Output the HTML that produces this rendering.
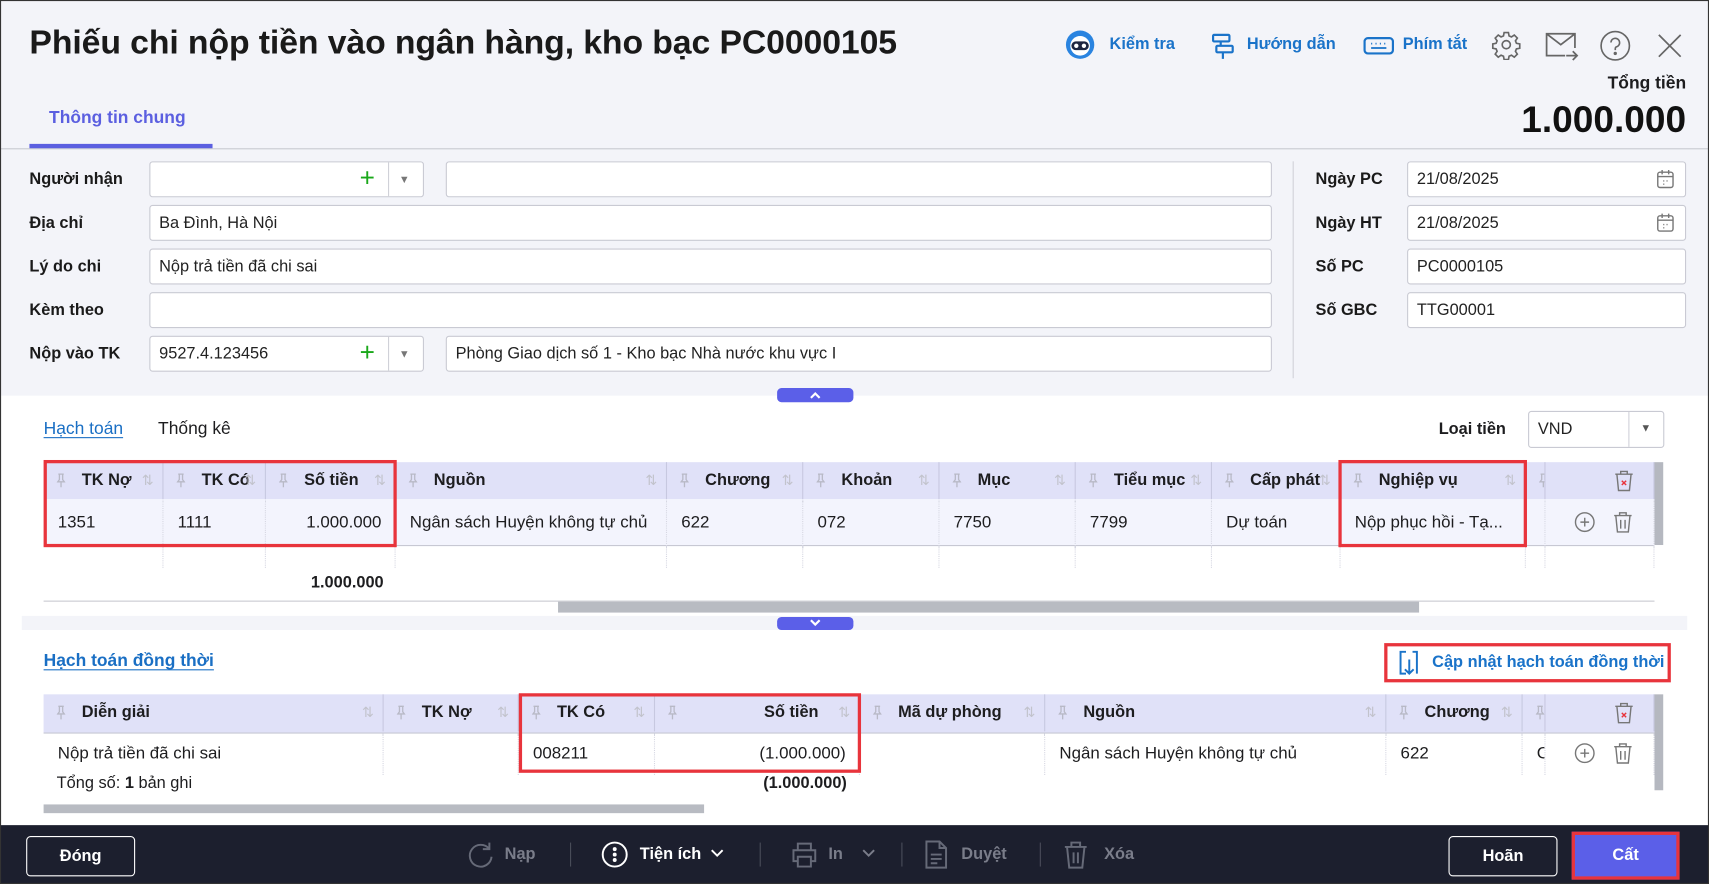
<!DOCTYPE html>
<html><head><meta charset="utf-8">
<style>
html,body{margin:0;padding:0;width:1709px;height:884px;overflow:hidden;background:#fff}
#w{position:absolute;left:0;top:0;width:1568px;height:811px;transform:scale(1.08992,1.09001);transform-origin:0 0;font-family:"Liberation Sans","DejaVu Sans",sans-serif;color:#1d1d1f;font-size:15px;background:#fff;overflow:hidden}
.a{position:absolute}
.b{font-weight:bold}
.lbl{position:absolute;font-weight:bold;font-size:15px;color:#1a1a1a}
.inp{position:absolute;background:#fff;border:1px solid #c9cad3;border-radius:3px;height:33px;box-sizing:border-box;font-size:15px;line-height:31px;padding-left:8px;color:#222}
.th{position:absolute;height:34px;line-height:34px;font-weight:bold;font-size:15px;border-right:1px solid #c7c8e0;box-sizing:border-box;white-space:nowrap;overflow:hidden}
.td{position:absolute;height:42px;line-height:42px;font-size:15.5px;border-right:1px dotted #d6d7e2;box-sizing:border-box;white-space:nowrap;overflow:hidden}
.pin{position:absolute;left:12px;top:10px;width:8px;height:14px}
.srt{position:absolute;right:8px;top:0;color:#c2c3cc;font-weight:normal;font-size:13px}
.red{position:absolute;border:3px solid #e8343c;box-sizing:border-box}
.blue{color:#1a73c9}
</style></head><body>
<div id="w">
<div class="a" style="left:0;top:0;width:1568px;height:363px;background:#f3f4f9"></div>
<div class="a" style="left:0;top:136px;width:1568px;height:1px;background:#c8c9d0"></div>
<div class="a b" style="left:27px;top:21px;font-size:31px;color:#1a1a1a;letter-spacing:-0.1px">Phiếu chi nộp tiền vào ngân hàng, kho bạc PC0000105</div>

<svg class="a" style="left:977px;top:27px" width="28" height="28" viewBox="0 0 28 28"><circle cx="14" cy="14" r="13" fill="#2a84e0"/><circle cx="14" cy="15" r="9" fill="#fff"/><rect x="6" y="11" width="16" height="8" rx="4" fill="#1c2540"/><circle cx="10.5" cy="15" r="2" fill="#fff"/><circle cx="17.5" cy="15" r="2" fill="#fff"/></svg>
<div class="a blue" style="left:1018px;top:32px;font-size:15px;font-weight:bold;color:#1a73c9">Kiểm tra</div>
<svg class="a" style="left:1110px;top:29px" width="24" height="26" viewBox="0 0 24 26" fill="none" stroke="#1a73c9" stroke-width="2"><rect x="3" y="3" width="15" height="6" rx="1"/><rect x="6" y="13" width="15" height="6" rx="1"/><path d="M10 9v4M12 19v6"/></svg>
<div class="a" style="left:1144px;top:32px;font-size:15px;font-weight:bold;color:#1a73c9">Hướng dẫn</div>
<svg class="a" style="left:1250px;top:32px" width="30" height="20" viewBox="0 0 30 20" fill="none" stroke="#1a73c9" stroke-width="2"><rect x="2" y="3" width="26" height="14" rx="3"/><path d="M8 8h1M12 8h1M16 8h1M20 8h1M8 12h14" stroke-width="1.6"/></svg>
<div class="a" style="left:1287px;top:32px;font-size:15px;font-weight:bold;color:#1a73c9">Phím tắt</div>
<svg class="a" style="left:1368px;top:27px" width="28" height="28" viewBox="0 0 24 24" fill="none" stroke="#666" stroke-width="1.3"><circle cx="12" cy="12" r="3.2"/><path d="M10.3 2.5h3.4l.5 2.6 1.9.8 2.2-1.5 2.4 2.4-1.5 2.2.8 1.9 2.6.5v3.4l-2.6.5-.8 1.9 1.5 2.2-2.4 2.4-2.2-1.5-1.9.8-.5 2.6h-3.4l-.5-2.6-1.9-.8-2.2 1.5-2.4-2.4 1.5-2.2-.8-1.9-2.6-.5v-3.4l2.6-.5.8-1.9-1.5-2.2 2.4-2.4 2.2 1.5 1.9-.8z"/></svg>
<svg class="a" style="left:1417px;top:27px" width="32" height="32" viewBox="0 0 32 32" fill="none" stroke="#666" stroke-width="1.6"><path d="M2 19V4h26v13M2 4l13 10 13-10M2 19v5h17"/><path d="M20 24h10M26 20l4 4-4 4"/></svg>
<svg class="a" style="left:1467px;top:27px" width="30" height="30" viewBox="0 0 30 30" fill="none" stroke="#666" stroke-width="1.5"><circle cx="15" cy="15" r="13"/><path d="M11 12a4 4 0 1 1 5 4c-1 .5-1 1-1 3"/><circle cx="15" cy="22" r=".8" fill="#666"/></svg>
<svg class="a" style="left:1520px;top:30px" width="24" height="24" viewBox="0 0 24 24" stroke="#666" stroke-width="1.6"><path d="M2 2l20 20M22 2L2 22"/></svg>
<div class="a b" style="right:21px;top:68px;font-size:16px">Tổng tiền</div>
<div class="a b" style="right:21px;top:91px;font-size:34px;color:#111">1.000.000</div>

<div class="a" style="left:45px;top:100px;font-size:16px;font-weight:bold;color:#5b5fe0">Thông tin chung</div>
<div class="a" style="left:27px;top:132px;width:168px;height:4px;background:#5b5fe0"></div>

<div class="lbl" style="left:27px;top:156px">Người nhận</div>
<div class="lbl" style="left:27px;top:196px">Địa chỉ</div>
<div class="lbl" style="left:27px;top:236px">Lý do chi</div>
<div class="lbl" style="left:27px;top:276px">Kèm theo</div>
<div class="lbl" style="left:27px;top:316px">Nộp vào TK</div>

<div class="inp" style="left:137px;top:148px;width:252px"></div>
<div class="a" style="left:330px;top:151px;color:#1aa81a;font-size:24px;line-height:26px">+</div>
<div class="a" style="left:356px;top:149px;width:1px;height:31px;background:#d0d1d8"></div>
<div class="a" style="left:366px;top:160px;color:#777;font-size:10px">▼</div>
<div class="inp" style="left:409px;top:148px;width:758px"></div>

<div class="inp" style="left:137px;top:188px;width:1030px">Ba Đình, Hà Nội</div>
<div class="inp" style="left:137px;top:228px;width:1030px">Nộp trả tiền đã chi sai</div>
<div class="inp" style="left:137px;top:268px;width:1030px"></div>
<div class="inp" style="left:137px;top:308px;width:252px">9527.4.123456</div>
<div class="a" style="left:330px;top:311px;color:#1aa81a;font-size:24px;line-height:26px">+</div>
<div class="a" style="left:356px;top:309px;width:1px;height:31px;background:#d0d1d8"></div>
<div class="a" style="left:366px;top:320px;color:#777;font-size:10px">▼</div>
<div class="inp" style="left:409px;top:308px;width:758px">Phòng Giao dịch số 1 - Kho bạc Nhà nước khu vực I</div>

<div class="a" style="left:1186px;top:148px;width:1px;height:199px;background:#d0d1d8"></div>
<div class="lbl" style="left:1207px;top:156px">Ngày PC</div>
<div class="lbl" style="left:1207px;top:196px">Ngày HT</div>
<div class="lbl" style="left:1207px;top:236px">Số PC</div>
<div class="lbl" style="left:1207px;top:276px">Số GBC</div>
<div class="inp" style="left:1291px;top:148px;width:256px">21/08/2025</div>
<div class="inp" style="left:1291px;top:188px;width:256px">21/08/2025</div>
<svg class="a" style="left:1519px;top:155px" width="18" height="19" viewBox="0 0 18 19" fill="none" stroke="#777" stroke-width="1.3"><rect x="2" y="3" width="14" height="14" rx="2"/><path d="M2 7h14M6 1v4M12 1v4"/><path d="M7 11h1M10 11h1M7 14h1" stroke-width="1.2"/></svg>
<svg class="a" style="left:1519px;top:195px" width="18" height="19" viewBox="0 0 18 19" fill="none" stroke="#777" stroke-width="1.3"><rect x="2" y="3" width="14" height="14" rx="2"/><path d="M2 7h14M6 1v4M12 1v4"/><path d="M7 11h1M10 11h1M7 14h1" stroke-width="1.2"/></svg>
<div class="inp" style="left:1291px;top:228px;width:256px">PC0000105</div>
<div class="inp" style="left:1291px;top:268px;width:256px">TTG00001</div>

<div class="a" style="left:713px;top:356px;width:70px;height:13px;border-radius:4px;background:#5b5fe8"></div>
<svg class="a" style="left:742px;top:358px" width="12" height="9" viewBox="0 0 12 9" fill="none" stroke="#fff" stroke-width="2"><path d="M2 7l4-4 4 4"/></svg>

<div class="a" style="left:40px;top:385px;font-size:16px;color:#1a6fc4;text-decoration:underline;text-underline-offset:3px">Hạch toán</div>
<div class="a" style="left:145px;top:385px;font-size:16px">Thống kê</div>
<div class="a b" style="left:1320px;top:385px;font-size:15px">Loại tiền</div>
<div class="inp" style="left:1402px;top:377px;width:125px;height:34px;line-height:32px">VND</div>
<div class="a" style="left:1494px;top:378px;width:1px;height:32px;background:#d0d1d8"></div>
<div class="a" style="left:1505px;top:388px;color:#555;font-size:10px">▼</div>

<div class="a" style="left:40px;top:424px;width:1478px;height:34px;background:#e0e1f8"></div>
<div class="a" style="left:40px;top:458px;width:1478px;height:42px;background:#f3f4fd;border-bottom:1px solid #c7c8d3"></div>
<div class="a" style="left:1518px;top:424px;width:8px;height:76px;background:#b5b8c0"></div>
<div id="t1"></div>
<div class="a b" style="left:40px;top:526px;width:312px;text-align:right">1.000.000</div>
<div class="a" style="left:40px;top:551px;width:1478px;height:1px;background:#c8c9d0"></div>
<div class="a" style="left:512px;top:552px;width:790px;height:10px;background:#b8bbc2"></div>
<div class="red" style="left:40px;top:422px;width:324px;height:80px"></div>
<div class="red" style="left:1228px;top:422px;width:173px;height:80px"></div>

<div class="a" style="left:20px;top:565px;width:1528px;height:13px;background:#f3f4f9"></div>
<div class="a" style="left:713px;top:566px;width:70px;height:12px;border-radius:4px;background:#5b5fe8"></div>
<svg class="a" style="left:742px;top:567px" width="12" height="9" viewBox="0 0 12 9" fill="none" stroke="#fff" stroke-width="2"><path d="M2 2l4 4 4-4"/></svg>

<div class="a" style="left:40px;top:598px;font-size:16px;color:#1a6fc4;text-decoration:underline;text-underline-offset:3px;font-weight:bold">Hạch toán đồng thời</div>
<div class="red" style="left:1270px;top:590px;width:263px;height:36px"></div>
<svg class="a" style="left:1282px;top:596px" width="22" height="25" viewBox="0 0 22 25" fill="none" stroke="#1a73c9" stroke-width="1.8"><path d="M8 2H3v20h5M14 2h4v20"/><path d="M11 9v13M7 18l4 4 4-4"/></svg>
<div class="a" style="left:1314px;top:599px;font-size:15px;font-weight:bold;color:#1a73c9">Cập nhật hạch toán đồng thời</div>

<div class="a" style="left:40px;top:637px;width:1478px;height:35px;background:#e0e1f8;border-bottom:1px solid #c7c8d3"></div>
<div class="a" style="left:1518px;top:637px;width:8px;height:88px;background:#b5b8c0"></div>
<div id="t2"></div>
<div class="a" style="left:52px;top:710px;font-size:15px">Tổng số: <b>1</b> bản ghi</div>
<div class="a b" style="left:601px;top:710px;width:176px;text-align:right">(1.000.000)</div>
<div class="red" style="left:476px;top:636px;width:314px;height:73px"></div>
<div class="a" style="left:40px;top:738px;width:606px;height:8px;background:#b8bbc2"></div>

<div class="a" style="left:0;top:757px;width:1568px;height:54px;background:#1c1f2e"></div>
<div class="a" style="left:24px;top:767px;width:98px;height:35px;border:1.5px solid #fff;border-radius:4px;color:#fff;text-align:center;line-height:35px;font-weight:bold;font-size:15px">Đóng</div>
<svg class="a" style="left:428px;top:771px" width="26" height="26" viewBox="0 0 26 26" fill="none" stroke="#666a78" stroke-width="1.8"><path d="M21 8A10 10 0 1 0 23 15M21 2v6h-6"/></svg>
<div class="a b" style="left:463px;top:775px;color:#7a7d8a;font-size:15px">Nạp</div>
<div class="a" style="left:523px;top:773px;width:1px;height:22px;background:#4a4d5a"></div>
<svg class="a" style="left:551px;top:771px" width="26" height="26" viewBox="0 0 26 26" fill="none" stroke="#fff" stroke-width="1.8"><circle cx="13" cy="13" r="11"/><circle cx="13" cy="8" r=".9" fill="#fff"/><circle cx="13" cy="13" r=".9" fill="#fff"/><circle cx="13" cy="18" r=".9" fill="#fff"/></svg>
<div class="a b" style="left:587px;top:775px;color:#fff;font-size:15px">Tiện ích</div>
<svg class="a" style="left:652px;top:779px" width="12" height="8" viewBox="0 0 12 8" fill="none" stroke="#fff" stroke-width="1.8"><path d="M1 1l5 5 5-5"/></svg>
<div class="a" style="left:697px;top:773px;width:1px;height:22px;background:#4a4d5a"></div>
<svg class="a" style="left:725px;top:771px" width="26" height="26" viewBox="0 0 26 26" fill="none" stroke="#666a78" stroke-width="1.8"><path d="M7 9V3h12v6M7 19H3V9h20v10h-4M7 15h12v9H7z"/></svg>
<div class="a b" style="left:760px;top:775px;color:#7a7d8a;font-size:15px">In</div>
<svg class="a" style="left:791px;top:779px" width="12" height="8" viewBox="0 0 12 8" fill="none" stroke="#7a7d8a" stroke-width="1.8"><path d="M1 1l5 5 5-5"/></svg>
<div class="a" style="left:827px;top:773px;width:1px;height:22px;background:#4a4d5a"></div>
<svg class="a" style="left:848px;top:770px" width="22" height="28" viewBox="0 0 22 28" fill="none" stroke="#666a78" stroke-width="1.8"><path d="M2 2h12l6 6v18H2zM14 2v6h6M6 14h10M6 18h10M6 22h6"/></svg>
<div class="a b" style="left:882px;top:775px;color:#7a7d8a;font-size:15px">Duyệt</div>
<div class="a" style="left:954px;top:773px;width:1px;height:22px;background:#4a4d5a"></div>
<svg class="a" style="left:975px;top:770px" width="24" height="28" viewBox="0 0 24 28" fill="none" stroke="#666a78" stroke-width="1.8"><path d="M2 7h20M8 7V3h8v4M4 7l2 19h12l2-19M10 12v10M14 12v10"/></svg>
<div class="a b" style="left:1013px;top:775px;color:#7a7d8a;font-size:15px">Xóa</div>
<div class="a" style="left:1329px;top:767px;width:98px;height:35px;border:1.5px solid #fff;border-radius:4px;color:#fff;text-align:center;line-height:35px;font-weight:bold;font-size:15px">Hoãn</div>
<div class="a" style="left:1442px;top:763px;width:99px;height:44px;border:3px solid #e8343c;box-sizing:border-box;background:#5b5fe8;color:#fff;text-align:center;line-height:38px;font-weight:bold;font-size:15px">Cất</div>

<div class="a" style="left:0;top:0;width:1568px;height:811px;border:1px solid #333;box-sizing:border-box;pointer-events:none"></div>
</div>
<script>
function pin(){return '<svg class="pin" viewBox="0 0 8 14" fill="none" stroke="#b8b9c6" stroke-width="1.2"><path d="M1.5 1h5M2.5 1v5L1 8h6L5.5 6V1M4 8v5"/></svg>';}
function build(id,cols,top,rows){
 var h='';
 cols.forEach(function(c){
  var w=c[1]-c[0];
  h+='<div class="th" style="left:'+c[0]+'px;top:'+top+'px;width:'+w+'px">'+(c[2]!==null?pin():'')+
   (c[2]?'<span style="position:absolute;left:'+(c[5]||35)+'px">'+c[2]+'</span>':'')+(c[3]?'<span class="srt">⇅</span>':'')+'</div>';
  rows.forEach(function(r,i){
   var t=r[0];
   h+='<div class="td" style="left:'+c[0]+'px;top:'+t+'px;width:'+w+'px;height:'+r[1]+'px;line-height:'+r[1]+'px;'+(c[4]=='r'?'text-align:right;padding-right:12px':'padding-left:13px')+'">'+(r[2][cols.indexOf(c)]||'')+'</div>';
  });
 });
 document.getElementById(id).innerHTML=h;
}
var c1=[[40,150,'TK Nợ',1],[150,244,'TK Có',1],[244,363,'Số tiền',1,'r'],[363,612,'Nguồn',1],[612,737,'Chương',1],[737,862,'Khoản',1],[862,987,'Mục',1],[987,1112,'Tiểu mục',1],[1112,1230,'Cấp phát',1],[1230,1400,'Nghiệp vụ',1],[1400,1418,'',0],[1418,1518,null,0]];
build('t1',c1,424,[[459,42,['1351','1111','1.000.000','Ngân sách Huyện không tự chủ','622','072','7750','7799','Dự toán','Nộp phục hồi - Tạ...','','']],[501,20,[]]]);
var c2=[[40,352,'Diễn giải',1],[352,476,'TK Nợ',1],[476,601,'TK Có',1],[601,789,'Số tiền',1,'r',100],[789,959,'Mã dự phòng',1],[959,1272,'Nguồn',1],[1272,1397,'Chương',1],[1397,1418,'',0],[1418,1518,null,0]];
build('t2',c2,637,[[673,38,['Nộp trả tiền đã chi sai','','008211','(1.000.000)','','Ngân sách Huyện không tự chủ','622','C','']]]);
function trash(x,y,red){return '<svg class="a" style="left:'+x+'px;top:'+y+'px" width="18" height="20" viewBox="0 0 18 20" fill="none" stroke="#777" stroke-width="1.3"><path d="M1 4h16M6 4V1.5h6V4M2.5 4l1.5 15h10l1.5-15"/>'+(red?'<path d="M7 10l4 4M11 10l-4 4" stroke="#e8343c"/>':'<path d="M7 8v8M11 8v8"/>')+'</svg>';}
function plus(x,y){return '<svg class="a" style="left:'+x+'px;top:'+y+'px" width="20" height="20" viewBox="0 0 20 20" fill="none" stroke="#777" stroke-width="1.3"><circle cx="10" cy="10" r="8.5"/><path d="M10 6v8M6 10h8"/></svg>';}
var w=document.getElementById('w'),d=document.createElement('div');
d.innerHTML=trash(1481,431,1)+plus(1444,469)+trash(1480,469)+trash(1481,644,1)+plus(1444,681)+trash(1480,681);
w.appendChild(d);
</script>
</body></html>
